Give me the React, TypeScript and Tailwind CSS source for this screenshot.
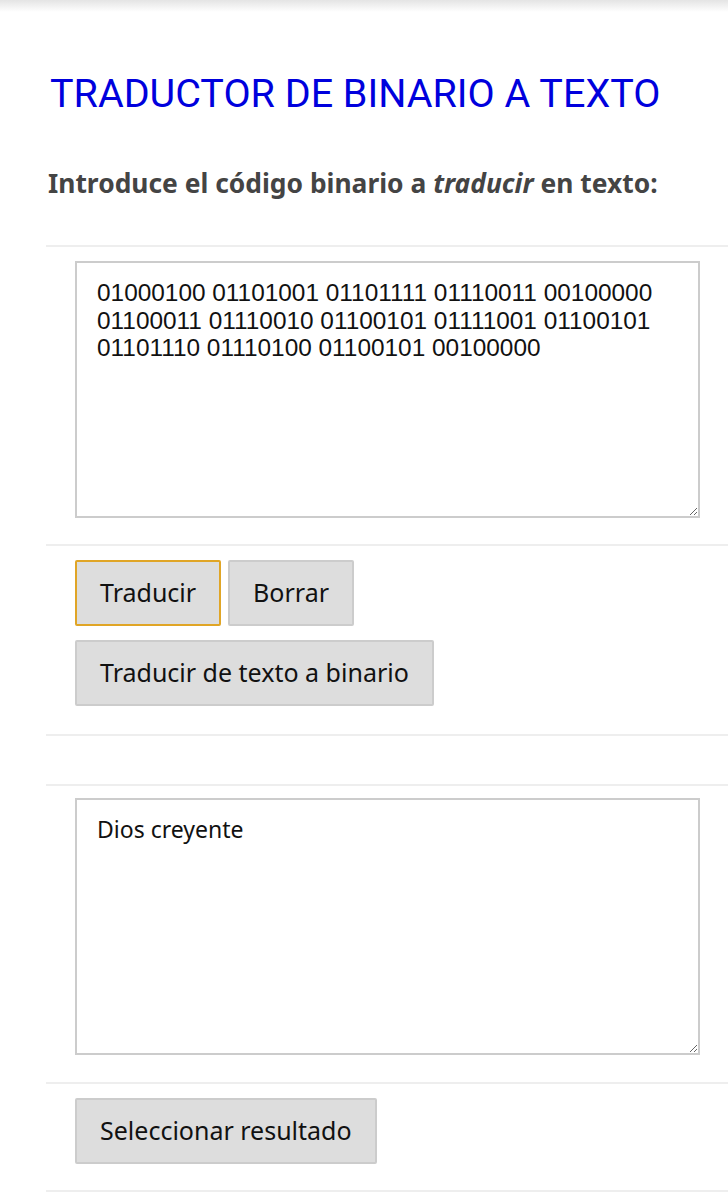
import React from 'react'

const binary =
  '01000100 01101001 01101111 01110011 00100000 01100011 01110010 01100101 01111001 01100101 01101110 01110100 01100101 00100000'

const ubuntu = "font-['Noto_Sans',_'Open_Sans',_sans-serif]"

const Row = ({ children, className = '' }: { children?: React.ReactNode; className?: string }) => (
  <div className={`border-t-2 border-[#eeeeee] pl-[29px] ${className}`}>{children}</div>
)

const GrayButton = ({ label, focused = false }: { label: string; focused?: boolean }) => (
  <button
    className={`h-[66px] rounded-[2px] border-2 bg-[#dddddd] px-[23px] text-[25px] text-[#111] ${ubuntu} ${
      focused ? 'border-[#e0a526]' : 'border-[#cccccc]'
    }`}
  >
    {label}
  </button>
)

export default function App() {
  return (
    <div className="relative min-h-[1200px] w-[728px] overflow-hidden bg-white">
      <div className="h-[12px] bg-gradient-to-b from-[#e4e4e4] to-white" />

      <h1 className="mt-[62px] pl-[50px] font-['Roboto',_sans-serif] text-[39.5px] leading-[40px] font-normal text-[#0000dd]">
        TRADUCTOR DE BINARIO A TEXTO
      </h1>

      <p className={`mt-[54px] pl-[48px] text-[26.4px] leading-[30px] font-bold text-[#444444] ${ubuntu}`}>
        Introduce el código binario a <em>traducir</em> en texto:
      </p>

      <div className="mt-[47px] ml-[46px]">
        <Row className="pt-[14px] pb-[26px]">
          <textarea
            readOnly
            defaultValue={binary}
            className="block h-[257px] w-[625px] border-2 border-[#cccccc] px-[20px] py-[16px] font-['Liberation_Sans',_Arial,_sans-serif] text-[24.4px] leading-[27.5px] text-[#111] outline-none"
          />
        </Row>

        <Row className="pt-[14px] pb-[28px]">
          <div className="flex gap-[7px]">
            <GrayButton label="Traducir" focused />
            <GrayButton label="Borrar" />
          </div>
          <div className="mt-[14px]">
            <GrayButton label="Traducir de texto a binario" />
          </div>
        </Row>

        <Row className="h-[50px]" />

        <Row className="pt-[12px] pb-[27px]">
          <textarea
            readOnly
            defaultValue="Dios creyente"
            className={`block h-[257px] w-[625px] border-2 border-[#cccccc] px-[20px] py-[16px] text-[23px] leading-[27.5px] text-[#111] outline-none ${ubuntu}`}
          />
        </Row>

        <Row className="pt-[14px] pb-[26px]">
          <GrayButton label="Seleccionar resultado" />
        </Row>

        <Row />
      </div>
    </div>
  )
}
